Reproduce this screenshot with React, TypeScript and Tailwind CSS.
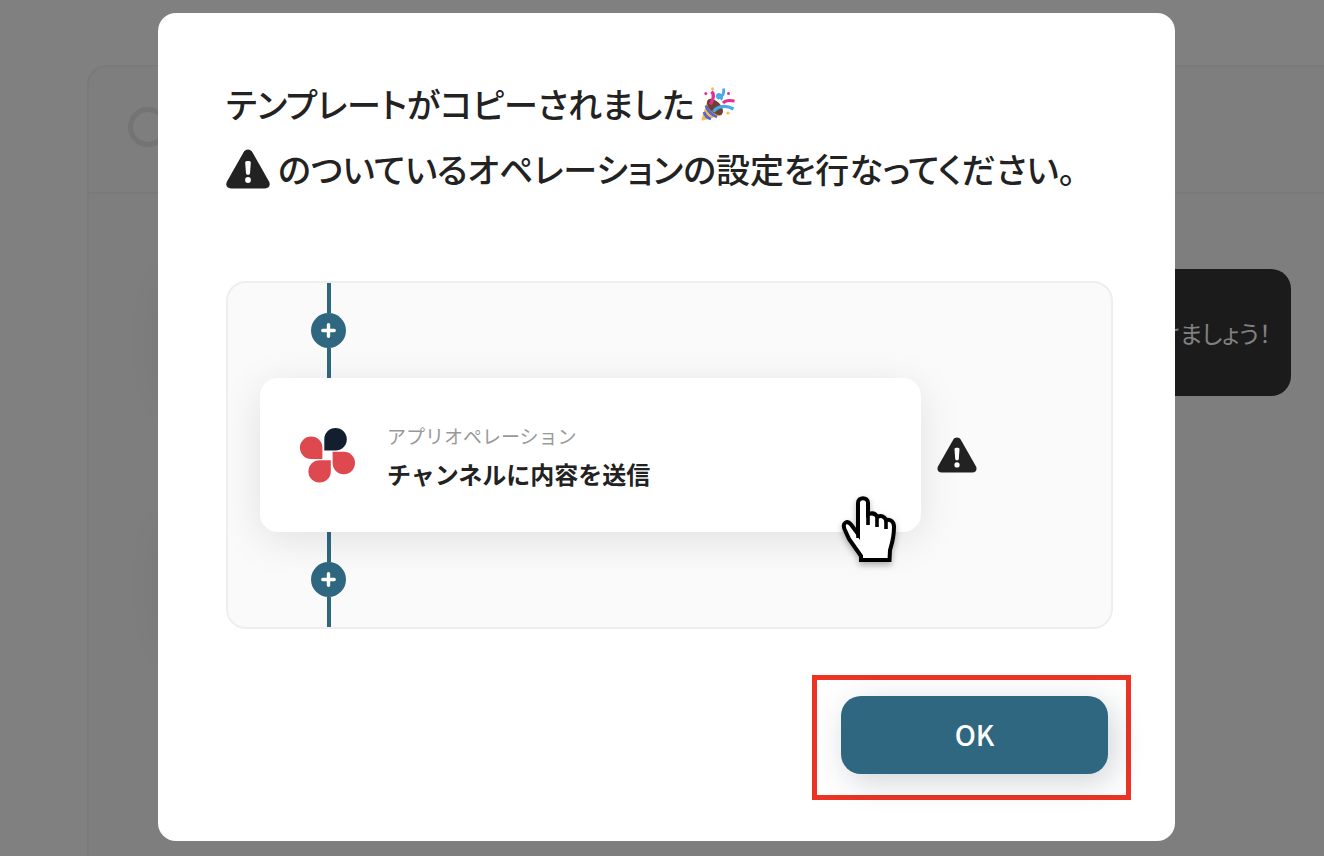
const WarningIcon = ({ className }: { className: string }) => {
    return (
        <svg viewBox="0 0 44 40" className={className} role="img" aria-label="警告">
            <path
                d="M17.6 3.2C19.6-.3 24.4-.3 26.4 3.2L43 32.6C44.8 36 43 39.4 39 39.4H5C1 39.4-.8 36 1 32.6Z"
                fill="#222222"
            />
            <path d="M19.2 13.4C19.2 11.6 24.8 11.6 24.8 13.4L24 24.4C23.8 26.2 20.2 26.2 20 24.4Z" fill="#ffffff" />
            <circle cx="22" cy="31" r="2.9" fill="#ffffff" />
        </svg>
    )
}

const PartyIcon = () => {
    return (
        <svg viewBox="0 0 34 34" className="h-[34px] w-[34px]" role="img" aria-label="クラッカー">
            <path d="M6.5 13L21.5 28L1.8 33.4C.8 33.6.4 33 .6 32Z" fill="#f6bd4c" />
            <ellipse cx="14" cy="20" rx="10" ry="5.6" transform="rotate(46 14 20)" fill="#6b4233" />
            <path d="M5 18.5C6 23.5 11 28.5 16 30M3 25C4 28.5 6.5 31 10 32" fill="none" stroke="#5865d6" strokeWidth="2.8" />
            <path d="M10.5 4.5C13.5 7 12.5 12 9.5 17.500" fill="none" stroke="#e62e92" strokeWidth="3.4" />
            <path d="M12.500 25C16 18.500 25 18 32.500 22" fill="none" stroke="#45abe8" strokeWidth="3.2" />
            <path d="M22.500 1.500C23.500 6 21.500 9.500 17.500 11C14.500 9 17.500 6 20 8.500C21.500 10 20.500 12 19.500 12.500" fill="none" stroke="#45abe8" strokeWidth="2.8" />
            <path d="M22 16C24 13.500 28 13 33.500 14" fill="none" stroke="#e62e92" strokeWidth="3" />
            <circle cx="11.5" cy="1.8" r="1.5" fill="#f6bd4c" />
            <circle cx="4.8" cy="6.5" r="1.5" fill="#e62e92" />
            <circle cx="27.5" cy="6.5" r="1.5" fill="#e62e92" />
            <circle cx="27" cy="26" r="1.6" fill="#f6bd4c" />
        </svg>
    )
}

const AppLogo = () => {
    return (
        <svg viewBox="0 0 55 55" className="h-[55px] w-[55px] shrink-0" aria-hidden="true">
            <path d="M35.5 0A11.2 11.2 0 1 1 35.5 22.6H24.3V11.3A11.2 11.2 0 0 1 35.5 0Z" fill="#131e2f" />
            <path d="M11.2 8.4A11.2 11.2 0 0 1 22.4 19.6V31H11.2A11.2 11.2 0 1 1 11.2 8.4Z" fill="#dd494f" />
            <path d="M32.6 23.8H43.8A11.2 11.2 0 1 1 32.6 35Z" fill="#dd494f" />
            <path d="M30.8 32.2V43.4A11.2 11.2 0 1 1 19.6 32.2Z" fill="#dd494f" />
        </svg>
    )
}

const HandIcon = () => {
    return (
        <svg viewBox="0 0 56 68" className="h-[68px] w-[56px] drop-shadow-[0_3px_3px_rgba(0,0,0,0.3)]" aria-hidden="true">
            <path
                d="M20 64V60L8 43L3.5 33C1 26.500 6.500 24 10 28.500L17 38V7C17 .5 27 .5 27 7V18.500C31 16.500 34.500 17.500 36.500 21C40 19 43.500 20.500 45 24C49.500 23 53 25.500 53 31C53 42 51.500 46 49 54L48.500 64Z"
                fill="#ffffff"
                stroke="#000000"
                strokeWidth="4"
            />
            <path d="M17 30V42M27 17V29M36 20V31M45 24V33" fill="none" stroke="#000000" strokeWidth="3.6" />
        </svg>
    )
}

const Connector = () => {
    return (
        <div className="flex w-[35px] flex-col items-center">
            <span className="h-[30px] w-1 bg-[#2f6780]" />
            <button type="button" aria-label="オペレーションを追加" className="flex h-[35px] w-[35px] items-center justify-center rounded-full bg-[#2f6780]">
                <svg viewBox="0 0 15 15" className="h-[15px] w-[15px]">
                    <path d="M7.5 1.800V13.200M1.800 7.500H13.200" stroke="#ffffff" strokeWidth="3.4" strokeLinecap="round" />
                </svg>
            </button>
            <span className="h-[30px] w-1 bg-[#2f6780]" />
        </div>
    )
}

// ============== page behind the dialog ==============
const FlowPage = () => {
    return (
        <div className="h-screen overflow-hidden pt-[65px] pl-[87px]">
            <div className="h-full rounded-tl-[20px] border-t-2 border-l-2 border-[#7a7a7a] bg-[#7e7e7e]">
                <div className="flex h-[127px] items-center border-b-2 border-[#7a7a7a] pr-10 pb-1.5 pl-[39px]">
                    <span className="h-10 w-10 rounded-full border-[5px] border-[#747474]" />
                </div>
                <div className="flex flex-col gap-[119px] pt-[75px] pr-[33px] pl-20">
                    <div className="flex justify-between">
                        <div className="h-[127px] w-1/2 rounded-[20px] bg-[#7f7f7f] shadow-[0_8px_40px_rgba(0,0,0,0.1)]" />
                        <div className="flex h-[127px] items-center rounded-[20px] bg-[#1b1b1b] pr-5 pl-10">
                            <p className="text-[24px] whitespace-nowrap text-[#818181]">けましょう！</p>
                        </div>
                    </div>
                    <div className="h-[127px] w-1/2 rounded-[20px] bg-[#7f7f7f] shadow-[0_8px_40px_rgba(0,0,0,0.1)]" />
                </div>
            </div>
        </div>
    )
}

// ============== dialog ==============
const CopiedDialog = () => {
    return (
        <div className="absolute inset-0 overflow-hidden pt-[13px] pr-[149px] pl-[158px]">
            <div role="dialog" aria-modal="true" aria-labelledby="dialog-title" className="rounded-[18px] bg-white pt-[58px] pb-[41px]">
                <div className="pr-[62px] pl-[68px]">
                    <h1 id="dialog-title" className="text-[34px] leading-[65px] font-medium whitespace-nowrap text-[#222222]">
                        <span className="flex items-center gap-1.5">
                            テンプレートがコピーされました
                            <PartyIcon />
                        </span>
                        <span className="flex items-center gap-2">
                            <WarningIcon className="h-10 w-11 shrink-0" />
                            のついているオペレーションの設定を行なってください。
                        </span>
                    </h1>

                    <div className="mt-20 overflow-hidden rounded-[20px] border-2 border-[#eeeeee] bg-[#fafafa]">
                        <div className="pl-[83px]">
                            <Connector />
                        </div>
                        <div className="flex items-center gap-4 pr-[134px] pl-8">
                            <div className="relative flex h-[154px] flex-1 items-center gap-8 rounded-[18px] bg-white pl-10 shadow-[0_8px_40px_rgba(0,0,0,0.1)]">
                                <AppLogo />
                                <div className="text-[#222222] [font-feature-settings:normal]">
                                    <p className="text-[19px] leading-[38px] text-[#999999]">アプリオペレーション</p>
                                    <p className="text-[24px] leading-[38px] font-bold">チャンネルに内容を送信</p>
                                </div>
                                <div className="absolute right-6 -bottom-8">
                                    <HandIcon />
                                </div>
                            </div>
                            <WarningIcon className="h-9 w-10 shrink-0" />
                        </div>
                        <div className="pl-[83px]">
                            <Connector />
                        </div>
                    </div>
                </div>

                <div className="mt-[46px] flex justify-end pr-11">
                    <div className="border-[5px] border-[#ec3424] pt-4 pr-[18px] pb-[21px] pl-6">
                        <button type="button" className="h-[78px] w-[267px] rounded-[20px] bg-[#2f6780] pb-0.5 text-[28px] font-medium text-white shadow-[6px_8px_32px_rgba(20,40,60,0.2)]">
                            OK
                        </button>
                    </div>
                </div>
            </div>
        </div>
    )
}

const App = () => {
    return (
        <main className="relative min-h-screen bg-[#808080] font-['Noto_Sans_CJK_JP',sans-serif] [font-feature-settings:'palt']" lang="ja">
            <FlowPage />
            <CopiedDialog />
        </main>
    )
}

export default App
